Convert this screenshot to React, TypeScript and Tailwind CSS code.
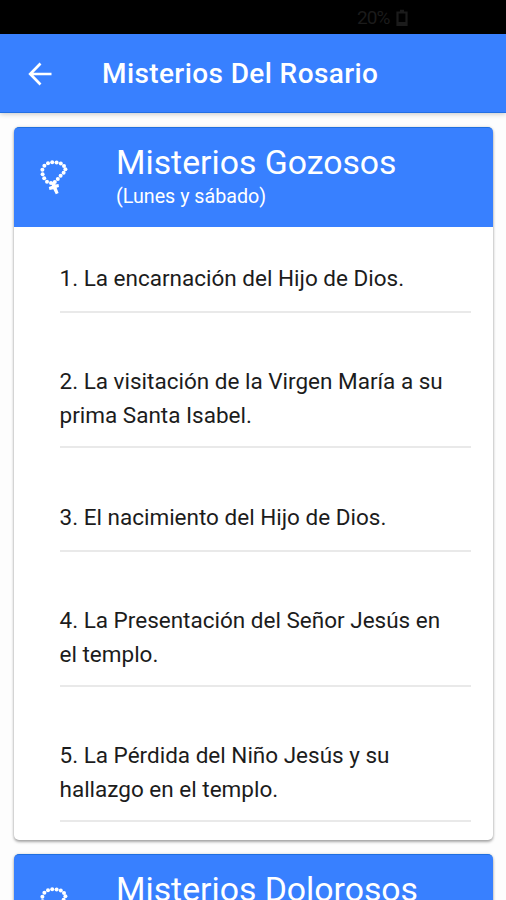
interface Mystery {
  title: string;
  days: string;
  items: string[];
}

const mysteries: Mystery[] = [
  {
    title: "Misterios Gozosos",
    days: "(Lunes y sábado)",
    items: [
      "1. La encarnación del Hijo de Dios.",
      "2. La visitación de la Virgen María a su prima Santa Isabel.",
      "3. El nacimiento del Hijo de Dios.",
      "4. La Presentación del Señor Jesús en el templo.",
      "5. La Pérdida del Niño Jesús y su hallazgo en el templo.",
    ],
  },
  {
    title: "Misterios Dolorosos",
    days: "",
    items: [],
  },
];

// beads of the rosary loop, [x, y]
const BEADS = [
  [11, 23], [7, 21.8], [4.2, 18.2], [2.6, 14.2], [2.4, 9.8], [4.4, 5.8], [8, 3.2],
  [12.2, 2.2], [16.6, 2.4], [20.8, 3.6], [24, 6], [25.4, 9.2], [23.6, 12.8], [20.6, 15.8], [17.8, 19], [14.8, 22],
];

function RosaryIcon() {
  return (
    <svg width="28" height="36" viewBox="0 0 28 36" fill="white">
      {BEADS.map(([x, y]) => (
        <circle key={`${x}-${y}`} cx={x} cy={y} r="2" />
      ))}
      <path d="M11 22.5 L14.5 21.5 L15.5 24.5 L18.5 24 L19 27 L16.6 27.8 L18.6 33 L15.8 34.2 L13.3 29.2 L9.5 30 L8.8 27 L12 25.7 Z" />
    </svg>
  );
}

function MysteryCard({ title, days, items }: Mystery) {
  return (
    <section className="shrink-0 rounded-[5px] bg-white shadow-[0_2px_3px_rgba(0,0,0,0.32),0_0_3px_rgba(0,0,0,0.15)]">
      <div className="flex h-[100px] rounded-t-[5px] border-t border-[#1f6fe0] bg-[#3880ff] pt-[15px] text-white">
        <div className="w-[102px] shrink-0 pl-[26px] pt-[17px]">
          <RosaryIcon />
        </div>
        <div>
          <h2 className="text-[33.75px] leading-[40px]">{title}</h2>
          <p className="text-[19.7px] leading-[28px]">{days}</p>
        </div>
      </div>
      <ul className="pb-[18px] pl-[45.5px] pr-[22px]">
        {items.map((item) => (
          <li key={item} className="flex min-h-[104px] flex-col justify-end border-b-2 border-[#e9e9e9] pb-[14px] pt-[51.4px] first:min-h-[86.4px] first:pt-0">
            <p className="min-h-[35px] pr-[16px] text-[22.5px] leading-[33.8px]">{item}</p>
          </li>
        ))}
      </ul>
    </section>
  );
}

export default function App() {
  return (
    <div className="flex h-[900px] w-full flex-col overflow-hidden bg-[#fdfdfd] font-['Roboto','Liberation_Sans',sans-serif] text-[#1c1c1c]">
      <div className="flex h-[34px] shrink-0 items-center bg-black pl-[357px] pt-[2px] text-[#1b1b1b]">
        <span className="w-[39px] text-[19px] tracking-[-0.9px]">20%</span>
        <svg width="12" height="18" viewBox="0 0 12 18" fill="none" stroke="currentColor" strokeWidth="2.2">
          <path d="M1.5 3.5h9v12.5h-9z" />
          <path d="M4 1.8h4M2 14h8" />
        </svg>
      </div>

      <header className="flex h-[79px] shrink-0 items-center border-b border-[#2470e4] bg-[#3880ff] pl-[28px] pt-[2px] text-white shadow-[0_1px_5px_rgba(0,0,0,0.22)]">
        <svg className="w-[74px]" width="74" height="24" viewBox="0 0 74 24" fill="none" stroke="white" strokeWidth="2.7">
          <path d="M23.5 12H2.5M12.5 1.5L2.2 12l10.3 10.5" />
        </svg>
        <h1 className="text-[28px] font-medium tracking-[0.4px]">Misterios Del Rosario</h1>
      </header>

      <main className="flex flex-col gap-[14px] pl-[14px] pr-[13px] pt-[14px]">
        {mysteries.map((m) => (
          <MysteryCard key={m.title} {...m} />
        ))}
      </main>
    </div>
  );
}
